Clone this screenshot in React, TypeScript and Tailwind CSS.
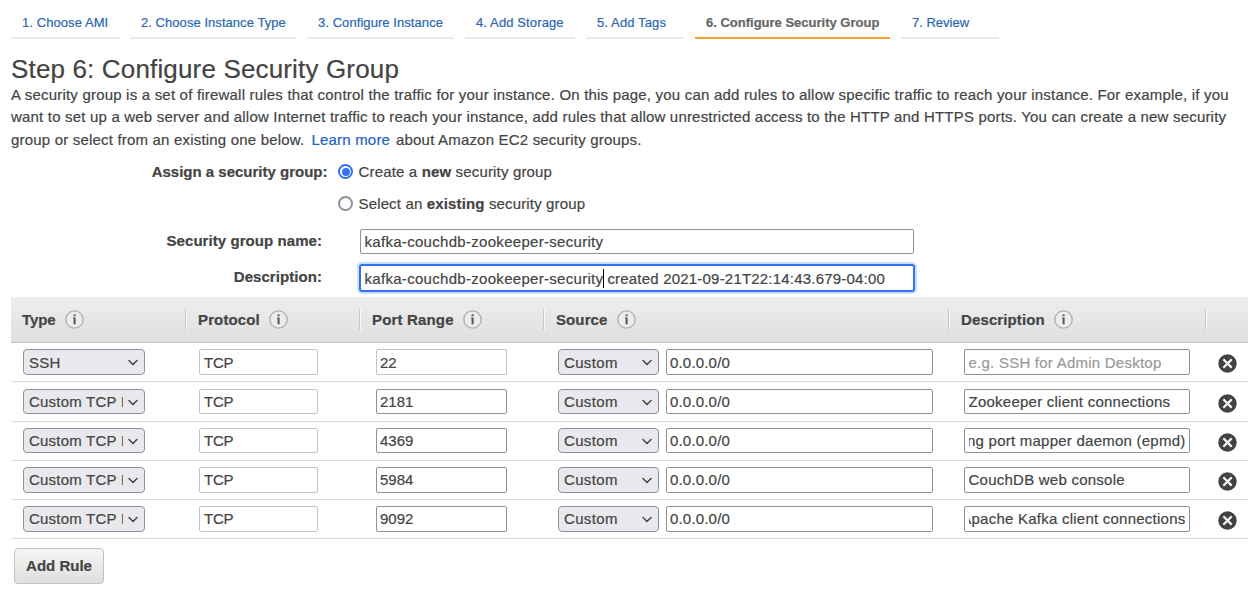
import React from "react";

const tabs = [
  { label: "1. Choose AMI", box: "w-[109px] mr-[10px]", spacing: "tracking-[0.08px]" },
  { label: "2. Choose Instance Type", box: "w-[166px] mr-[11px]", spacing: "tracking-[0.052px]" },
  { label: "3. Configure Instance", box: "w-[147px] mr-[11px]", spacing: "tracking-[0.068px]" },
  { label: "4. Add Storage", box: "w-[110px] mr-[11px]", spacing: "tracking-[0.12px]" },
  { label: "5. Add Tags", box: "w-[98px] mr-[11px]", spacing: "tracking-[0.12px]" },
  { label: "6. Configure Security Group", box: "w-[195px] mr-[11px]", spacing: "", active: true },
  { label: "7. Review", box: "w-[98px]", spacing: "" },
];

const columns = [
  { label: "Type", cell: "w-[175px] pl-[11px]", text: "tracking-[-0.1px]", gap: "ml-[9px]" },
  { label: "Protocol", cell: "w-[174px] pl-[12px]", text: "tracking-[0.13px]", gap: "ml-[9.5px]" },
  { label: "Port Range", cell: "w-[184px] pl-[12px]", text: "tracking-[0.17px]", gap: "ml-[9px]" },
  { label: "Source", cell: "w-[405px] pl-[12px]", text: "tracking-[0.1px]", gap: "ml-[10px]" },
  { label: "Description", cell: "w-[257px] pl-[12px]", text: "tracking-[0.12px]", gap: "ml-[9.5px]" },
];

type Rule = {
  type: string;
  port: string;
  description: string;
  height: string;
  field: string;
  locked?: boolean;
  placeholder?: boolean;
  scrolled?: boolean;
};

const rules: Rule[] = [
  { type: "SSH", port: "22", description: "e.g. SSH for Admin Desktop", height: "h-[39px] pt-[6px]", field: "h-[26px] leading-[25px]", locked: true, placeholder: true },
  { type: "Custom TCP Rule", port: "2181", description: "Zookeeper client connections", height: "h-[40px] pt-[7px]", field: "h-[25px] leading-[23px]" },
  { type: "Custom TCP Rule", port: "4369", description: "Erlang port mapper daemon (epmd)", height: "h-[39px] pt-[6px]", field: "h-[25px] leading-[23px]", scrolled: true },
  { type: "Custom TCP Rule", port: "5984", description: "CouchDB web console", height: "h-[39px] pt-[6px]", field: "h-[26px] leading-[23px]" },
  { type: "Custom TCP Rule", port: "9092", description: "Apache Kafka client connections", height: "h-[39px] pt-[6px]", field: "h-[26px] leading-[23px]", scrolled: true },
];

function InfoIcon({ className }: { className: string }) {
  return (
    <svg className={`h-[19px] w-[19px] shrink-0 ${className}`} viewBox="0 0 19 19" fill="none">
      <circle cx="9.5" cy="9.5" r="8.7" fill="#ececec" stroke="#adadad" strokeWidth="1.3" />
      <rect x="8.6" y="4.4" width="2" height="1.8" fill="#555" />
      <path d="M8 7.5h2.6v6.7H8.6V8.4H8z" fill="#555" />
    </svg>
  );
}

function RemoveIcon() {
  return (
    <svg className="mt-[5px] ml-[27.5px] h-[19px] w-[19px] shrink-0" viewBox="0 0 19 19" fill="none">
      <circle cx="9.5" cy="9.5" r="9.2" fill="#424242" />
      <path d="M6.1 6.1l6.8 6.8M12.9 6.1l-6.8 6.8" stroke="#f6f6f6" strokeWidth="2.2" strokeLinecap="square" />
    </svg>
  );
}

function Select({ value, className, clip }: { value: string; className: string; clip: string }) {
  return (
    <div className={`flex shrink-0 justify-between rounded-[4px] border border-[#8f8f9d] bg-[#e9e9ed] pr-[6px] pl-[5px] ${className}`}>
      <span className={`overflow-hidden whitespace-nowrap ${clip}`}>{value}</span>
      <svg className="mt-[9px] h-[8px] w-[10px] shrink-0" viewBox="0 0 10 8" fill="none">
        <path d="M1 1.5l4 4 4-4" stroke="#444" strokeWidth="1.5" strokeLinecap="round" strokeLinejoin="round" />
      </svg>
    </div>
  );
}

function Field({ children, className, locked }: { children: React.ReactNode; className: string; locked?: boolean }) {
  return (
    <div className={`shrink-0 rounded-[2px] border bg-white ${locked ? "border-[#c3c3cb]" : "border-[#8f8f9d]"} ${className}`}>
      {children}
    </div>
  );
}

function Radio({ checked }: { checked?: boolean }) {
  return (
    <span className={`mr-[5.5px] mb-px flex h-[15px] w-[15px] shrink-0 items-center justify-center rounded-full border-2 ${checked ? "border-[#3571f6]" : "border-[#8f8f9d]"}`}>
      {checked && <span className="h-[8px] w-[8px] rounded-full bg-[#3571f6]" />}
    </span>
  );
}

export default function App() {
  return (
    <main className="h-[595px] w-[1254px] overflow-hidden bg-white pl-[11px] font-['Liberation_Sans',Arial,sans-serif] text-[15px] text-[#444] [-webkit-text-stroke:0.2px_currentColor]">
      <nav className="flex h-[39px]">
        {tabs.map((t) => (
          <a
            key={t.label}
            className={`shrink-0 border-b-2 pt-[13px] pl-[11px] text-[13px] leading-[19px] whitespace-nowrap ${t.box} ${t.spacing} ${
              t.active ? "border-[#f2a030] font-bold text-[#666]" : "border-[#eaeaea] text-[#2a67b2]"
            }`}
          >
            {t.label}
          </a>
        ))}
      </nav>

      <h1 className="mt-[15px] h-[30px] text-[26px] leading-[30px] tracking-[0.157px] whitespace-nowrap">Step 6: Configure Security Group</h1>

      <div className="leading-[22px] whitespace-nowrap">
        <p className="h-[22px] tracking-[0.2px]">
          A security group is a set of firewall rules that control the traffic for your instance. On this page, you can add rules to allow specific traffic to reach your instance. For example, if you
        </p>
        <p className="h-[23px] tracking-[0.188px]">
          want to set up a web server and allow Internet traffic to reach your instance, add rules that allow unrestricted access to the HTTP and HTTPS ports. You can create a new security
        </p>
        <p className="flex h-[22px] tracking-[0.19px]">
          <span className="w-[300.5px]">group or select from an existing one below.</span>
          <a className="w-[84.5px] text-[#1f5fc4]">Learn more</a>
          <span>about Amazon EC2 security groups.</span>
        </p>
      </div>

      <div className="mt-[10px] flex h-[22px] items-center whitespace-nowrap">
        <span className="w-[327px] pr-[10.5px] text-right font-bold">Assign a security group:</span>
        <Radio checked />
        <span className="tracking-[0.16px]">
          Create a <b>new</b> security group
        </span>
      </div>
      <div className="mt-[10px] flex h-[22px] items-center pl-[327px] whitespace-nowrap">
        <Radio />
        <span className="tracking-[0.15px]">
          Select an <b>existing</b> security group
        </span>
      </div>

      <div className="mt-[14px] flex h-[25px] whitespace-nowrap">
        <span className="w-[311px] text-right leading-[23px] font-bold tracking-[0.065px]">Security group name:</span>
        <Field className="ml-[38px] h-[25px] w-[554px] pl-[3.5px] leading-[23px] tracking-[0.3px]">kafka-couchdb-zookeeper-security</Field>
      </div>
      <div className="mt-[10px] flex h-[28px] whitespace-nowrap">
        <span className="w-[311px] text-right leading-[25px] font-bold tracking-[0.06px]">Description:</span>
        <div className="ml-[37px] flex h-[28px] w-[556px] items-center rounded-[3px] border-2 border-[#3571f6] bg-white pt-px pl-[3.5px] leading-[24px] shadow-[0_0_0_2px_#c8e0fd]">
          <span className="tracking-[0.3px]">kafka-couchdb-zookeeper-security</span>
          <span className="mr-[-1px] h-[19px] w-px bg-black" />
          <span className="pl-[4px] tracking-[0.2px]">created 2021-09-21T22:14:43.679-04:00</span>
        </div>
      </div>

      <section className="mt-[5px] w-[1237px]">
        <div className="flex h-[46px] items-center border-b border-[#c4c4c4] bg-linear-to-b from-[#eeeeee] to-[#dfdfdf] font-bold">
          {columns.map((c) => (
            <div key={c.label} className={`flex h-[21px] shrink-0 items-center border-r border-[#c6c6c6] whitespace-nowrap shadow-[1px_0_0_#f8f8f8] ${c.cell}`}>
              <span className={`leading-[21px] ${c.text}`}>{c.label}</span>
              <InfoIcon className={c.gap} />
            </div>
          ))}
        </div>
        {rules.map((r) => (
          <div key={r.port} className={`flex border-b border-[#dcdcdc] pl-[12px] whitespace-nowrap ${r.height}`}>
            <Select value={r.type} className={`w-[122px] tracking-[0.22px] ${r.field}`} clip="w-[94px]" />
            <Field locked className={`ml-[54px] w-[119px] pl-[4px] tracking-[-0.2px] ${r.field}`}>TCP</Field>
            <Field locked={r.locked} className={`ml-[58px] w-[131px] pl-[3px] ${r.field}`}>{r.port}</Field>
            <Select value="Custom" className={`ml-[51px] w-[101px] tracking-[0.35px] ${r.field}`} clip="w-[70px]" />
            <Field className={`ml-[7px] w-[267px] pl-[3px] tracking-[0.18px] ${r.field}`}>0.0.0.0/0</Field>
            <Field className={`ml-[31px] w-[226px] px-[3.5px] tracking-[0.24px] ${r.field}`}>
              <div className={`flex overflow-hidden ${r.scrolled ? "justify-end" : ""} ${r.placeholder ? "text-[#999]" : ""}`}>
                <span>{r.description}</span>
              </div>
            </Field>
            <RemoveIcon />
          </div>
        ))}
      </section>

      <button className="mt-[9px] ml-[3px] block h-[36px] w-[90px] rounded-[4px] border border-[#c2c2c2] bg-linear-to-b from-[#f6f6f6] to-[#dfdfdf] text-center leading-[34px] font-bold">
        Add Rule
      </button>
    </main>
  );
}
